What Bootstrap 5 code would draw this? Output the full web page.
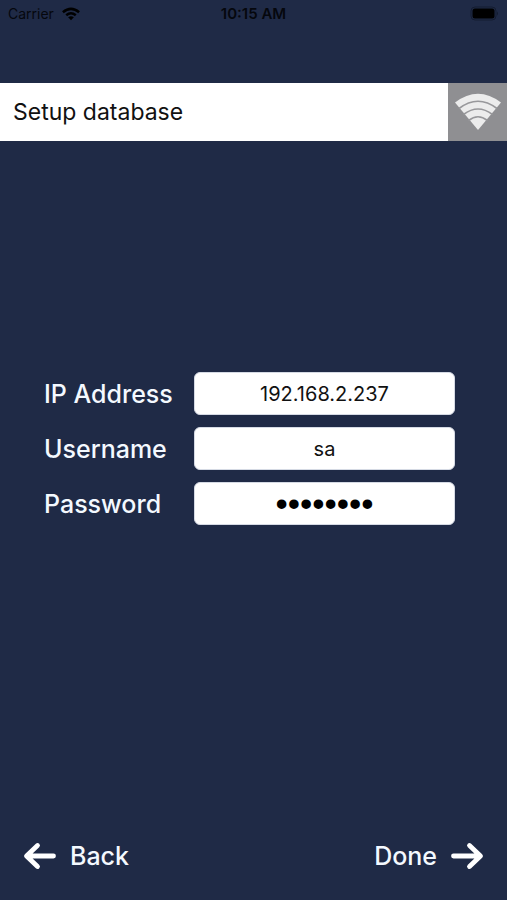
<!DOCTYPE html>
<html lang="en">
<head>
<meta charset="utf-8">
<meta name="viewport" content="width=device-width, initial-scale=1">
<title>Setup database</title>
<link href="https://cdn.jsdelivr.net/npm/bootstrap@5.3.0/dist/css/bootstrap.min.css" rel="stylesheet">
<style>
  body { background: #1f2a46; color: #f4f9ff; font-family: Inter, "Liberation Sans", sans-serif; }
  .status-bar { height: 83px; padding: 4px 8px; color: #05070d; font-size: 14px; line-height: 20px; }
  .status-bar .clock { font-size: 15px; }
  .title-bar { height: 58px; background: #fff; }
  .title-bar h1 { font-size: 23px; line-height: 28px; padding-left: 13px; color: #111; }
  .signal { width: 59px; background: #8f8f92; border: 0; }
  .setup-form { padding: 0 52px 0 44px; }
  .setup-form .fields { gap: 12px; }
  .setup-form label { width: 150px; font-size: 25px; line-height: 32px; font-weight: 500; }
  .setup-form .form-control { height: 43px; border: 1px solid #d5dae4; border-radius: 6px; background: #fff; color: #111; font-size: 20px; line-height: 28px; padding: 0 8px; }
  .setup-form .secret { font-family: "Liberation Sans", Arial, sans-serif; font-size: 35px; color: #000; }
  .actions { padding: 84px 22px 28px; }
  .nav-btn { color: #f4f9ff; font-size: 25px; line-height: 32px; font-weight: 500; gap: 12px; }
</style>
<script src="https://cdn.jsdelivr.net/npm/bootstrap@5.3.0/dist/js/bootstrap.bundle.min.js" defer></script>
</head>
<body class="d-flex flex-column min-vh-100">
  <div class="status-bar d-flex align-items-start">
    <div class="col d-flex align-items-center gap-2">
      <span>Carrier</span>
      <svg width="18" height="14" viewBox="0 0 20 15" fill="none" stroke="#000" stroke-width="2.8" aria-hidden="true">
        <path d="M1 5.600Q10-2 19 5.600M4.700 8.900Q10 4.400 15.300 8.900"/>
        <path d="M10 14.500L6.800 11.200Q10 8.600 13.200 11.200Z" fill="#000" stroke="none"/>
      </svg>
    </div>
    <span class="clock fw-semibold">10:15 AM</span>
    <div class="col d-flex justify-content-end align-items-center align-self-start">
      <svg width="29" height="19" viewBox="0 0 29 19" aria-hidden="true">
        <rect x="1" y="3" width="25" height="13" rx="4" fill="none" stroke="#141c30"/>
        <rect x="2.500" y="4.500" width="22" height="10" rx="2.500" fill="#000"/>
        <path d="M27 7.500q2 2 0 4z" fill="#141c30"/>
      </svg>
    </div>
  </div>
  <header class="title-bar d-flex">
    <h1 class="flex-grow-1 align-self-center m-0 fw-normal">Setup database</h1>
    <button type="button" class="signal p-0 d-flex justify-content-center align-items-center" aria-label="Connection">
      <svg width="48" height="40" viewBox="0 0 48 40" aria-hidden="true">
        <path d="M24 38L1 10.500Q24-7 47 10.500Z" fill="#ececec"/>
        <path d="M5 16.500Q24 2 43 16.500M9.500 22.500Q24 11.500 38.500 22.500M14.500 28.500Q24 21 33.500 28.500" fill="none" stroke="#98989b" stroke-width="1.600"/>
      </svg>
    </button>
  </header>
  <main class="flex-grow-1 d-flex flex-column justify-content-center">
    <form class="setup-form">
      <div class="fields d-flex flex-column">
        <div class="d-flex align-items-center">
          <label class="flex-shrink-0" for="ip">IP Address</label>
          <input class="form-control text-center" id="ip" type="text" value="192.168.2.237">
        </div>
        <div class="d-flex align-items-center">
          <label class="flex-shrink-0" for="user">Username</label>
          <input class="form-control text-center" id="user" type="text" value="sa" autocomplete="username">
        </div>
        <div class="d-flex align-items-center">
          <label class="flex-shrink-0" for="pass">Password</label>
          <input class="form-control text-center secret" id="pass" type="password" value="database" autocomplete="current-password">
        </div>
      </div>
    </form>
  </main>
  <footer class="actions d-flex justify-content-between">
    <button type="button" class="nav-btn btn border-0 p-0 d-flex align-items-center">
      <svg width="36" height="30" viewBox="0 0 36 30" fill="none" stroke="#fff" stroke-width="4.800" stroke-linecap="round" stroke-linejoin="round" aria-hidden="true"><path d="M31.500 15H5M15.500 4.500L4.500 15L15.500 25.500"/></svg>
      <span>Back</span>
    </button>
    <button type="button" class="nav-btn btn border-0 p-0 d-flex align-items-center">
      <span>Done</span>
      <svg width="36" height="30" viewBox="0 0 36 30" fill="none" stroke="#fff" stroke-width="4.800" stroke-linecap="round" stroke-linejoin="round" aria-hidden="true"><path d="M4.500 15H31M20.500 4.500L31.500 15L20.500 25.500"/></svg>
    </button>
  </footer>
</body>
</html>
